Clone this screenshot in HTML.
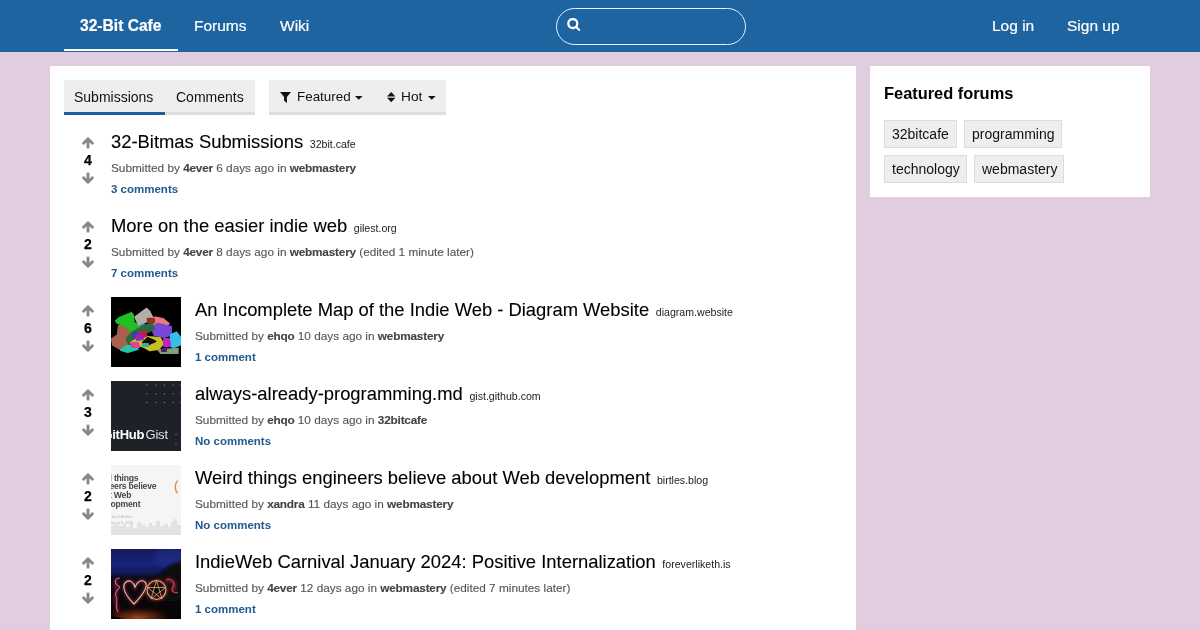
<!DOCTYPE html>
<html><head><meta charset="utf-8">
<style>
*{margin:0;padding:0;box-sizing:border-box}
html,body{width:1200px;height:630px;overflow:hidden}
body{background:#e0cde0;font-family:"Liberation Sans",sans-serif;position:relative;color:#000}
.a{position:absolute;white-space:nowrap;line-height:20px}
#hdr{position:absolute;left:0;top:0;width:1200px;height:52px;background:#1d64a0}
.nav{color:#fff;font-size:15.5px;top:16px;-webkit-text-stroke:0.2px #fff}
#uline{position:absolute;left:64px;top:49px;width:114px;height:2px;background:#fff}
#search{position:absolute;left:556px;top:8px;width:190px;height:37px;border:1px solid #e8f0ff;border-radius:19px}
#main{position:absolute;left:50px;top:66px;width:806px;height:600px;background:#fff}
#side{position:absolute;left:870px;top:66px;width:280px;height:131px;background:#fff}
.tabbox{position:absolute;top:80px;height:35px;background:#eee;border-bottom:3px solid #ddd}
.tab{font-size:14px;color:#111}
.vote{font-size:14px;font-weight:bold;text-align:center;width:20px;-webkit-text-stroke:0.25px #000}
.title{font-size:18.4px;color:#000;-webkit-text-stroke:0.1px #000}
.dom{font-size:10.6px;color:#222;-webkit-text-stroke:0;margin-left:1.5px}
.meta{font-size:11.8px;color:#555;-webkit-text-stroke:0.12px #555}
.meta b{color:#444;letter-spacing:-0.2px;-webkit-text-stroke:0.12px #444}
.cm{font-size:11.5px;font-weight:bold;color:#22598e}
.tag{position:absolute;height:28px;background:#eee;border:1px solid #ddd;font-size:14px;line-height:26px;padding:0 7px;color:#111;white-space:nowrap}
svg.arr{position:absolute}
.thumb{position:absolute;width:70px;height:70px;overflow:hidden}
</style></head><body>
<div id="root" style="position:absolute;left:0;top:0;width:1200px;height:630px;will-change:transform">
<div id="hdr"></div>
<div class="a nav" style="left:80px;font-weight:bold;font-size:15.6px">32-Bit Cafe</div>
<div class="a nav" style="left:194px">Forums</div>
<div class="a nav" style="left:280px">Wiki</div>
<div id="uline"></div>
<div id="search"></div>
<svg style="position:absolute;left:567px;top:18px" width="14" height="14" viewBox="0 0 14 14"><circle cx="5.8" cy="5.5" r="4.5" fill="none" stroke="#fff" stroke-width="2.3"/><line x1="9" y1="8.8" x2="12.2" y2="12" stroke="#fff" stroke-width="2" stroke-linecap="round"/></svg>
<div class="a nav" style="left:992px">Log in</div>
<div class="a nav" style="left:1067px">Sign up</div>

<div id="main"></div>
<div id="side"></div>

<div class="tabbox" style="left:64px;width:191px"></div>
<div style="position:absolute;left:64px;top:112px;width:101px;height:3px;background:#1d5f9a"></div>
<div class="a tab" style="left:74px;top:87px">Submissions</div>
<div class="a tab" style="left:176px;top:87px">Comments</div>

<div class="tabbox" style="left:269px;width:177px"></div>
<svg style="position:absolute;left:280px;top:92px" width="11" height="11" viewBox="0 0 11 11"><path d="M0 0H11L6.9 4.9V11L4.1 8.8V4.9Z" fill="#111"/></svg>
<div class="a tab" style="left:297px;top:87px;font-size:13.4px">Featured</div>
<svg style="position:absolute;left:355px;top:96px" width="8" height="5" viewBox="0 0 8 5"><path d="M0 0H7.6L3.8 3.8Z" fill="#111"/></svg>
<svg style="position:absolute;left:387px;top:92px" width="9" height="11" viewBox="0 0 9 11"><path d="M4.2 0L8.4 4.4H0Z M0 5.8H8.4L4.2 10.2Z" fill="#111"/></svg>
<div class="a tab" style="left:401px;top:87px;font-size:13.7px">Hot</div>
<svg style="position:absolute;left:428px;top:96px" width="8" height="5" viewBox="0 0 8 5"><path d="M0 0H7.6L3.8 3.8Z" fill="#111"/></svg>

<div class="a" style="left:884px;top:83px;font-size:16.4px;font-weight:bold">Featured forums</div>
<div class="tag" style="left:884px;top:120px;width:73px">32bitcafe</div>
<div class="tag" style="left:964px;top:120px;width:98px">programming</div>
<div class="tag" style="left:884px;top:155px;width:83px">technology</div>
<div class="tag" style="left:974px;top:155px;width:90px">webmastery</div>

<!-- POSTS -->
<div id="posts">
<svg class="arr" style="left:82px;top:137px" width="12" height="12" viewBox="109 165 1575 1575"><path d="M1675 971q0 51-37 90l-75 75q-38 38-91 38-54 0-90-38l-294-293v704q0 52-37.5 84.5t-90.5 32.5h-128q-53 0-90.5-32.5t-37.5-84.5v-704l-294 293q-36 38-90 38t-90-38l-75-75q-38-38-38-90 0-53 38-91l651-651q35-37 90-37 54 0 91 37l651 651q37 39 37 91z" fill="#888"/></svg>
<div class="a vote" style="left:78px;top:150px">4</div>
<svg class="arr" style="left:82px;top:172px;transform:scaleY(-1)" width="12" height="12" viewBox="109 165 1575 1575"><path d="M1675 971q0 51-37 90l-75 75q-38 38-91 38-54 0-90-38l-294-293v704q0 52-37.5 84.5t-90.5 32.5h-128q-53 0-90.5-32.5t-37.5-84.5v-704l-294 293q-36 38-90 38t-90-38l-75-75q-38-38-38-90 0-53 38-91l651-651q35-37 90-37 54 0 91 37l651 651q37 39 37 91z" fill="#888"/></svg>
<div class="a title" style="left:111px;top:132px">32-Bitmas Submissions <span class="dom">32bit.cafe</span></div>
<div class="a meta" style="left:111px;top:158px">Submitted by <b>4ever</b> 6 days ago in <b>webmastery</b></div>
<div class="a cm" style="left:111px;top:179px">3 comments</div>
<svg class="arr" style="left:82px;top:221px" width="12" height="12" viewBox="109 165 1575 1575"><path d="M1675 971q0 51-37 90l-75 75q-38 38-91 38-54 0-90-38l-294-293v704q0 52-37.5 84.5t-90.5 32.5h-128q-53 0-90.5-32.5t-37.5-84.5v-704l-294 293q-36 38-90 38t-90-38l-75-75q-38-38-38-90 0-53 38-91l651-651q35-37 90-37 54 0 91 37l651 651q37 39 37 91z" fill="#888"/></svg>
<div class="a vote" style="left:78px;top:234px">2</div>
<svg class="arr" style="left:82px;top:256px;transform:scaleY(-1)" width="12" height="12" viewBox="109 165 1575 1575"><path d="M1675 971q0 51-37 90l-75 75q-38 38-91 38-54 0-90-38l-294-293v704q0 52-37.5 84.5t-90.5 32.5h-128q-53 0-90.5-32.5t-37.5-84.5v-704l-294 293q-36 38-90 38t-90-38l-75-75q-38-38-38-90 0-53 38-91l651-651q35-37 90-37 54 0 91 37l651 651q37 39 37 91z" fill="#888"/></svg>
<div class="a title" style="left:111px;top:216px">More on the easier indie web <span class="dom">gilest.org</span></div>
<div class="a meta" style="left:111px;top:242px">Submitted by <b>4ever</b> 8 days ago in <b>webmastery</b> (edited 1 minute later)</div>
<div class="a cm" style="left:111px;top:263px">7 comments</div>
<svg class="arr" style="left:82px;top:305px" width="12" height="12" viewBox="109 165 1575 1575"><path d="M1675 971q0 51-37 90l-75 75q-38 38-91 38-54 0-90-38l-294-293v704q0 52-37.5 84.5t-90.5 32.5h-128q-53 0-90.5-32.5t-37.5-84.5v-704l-294 293q-36 38-90 38t-90-38l-75-75q-38-38-38-90 0-53 38-91l651-651q35-37 90-37 54 0 91 37l651 651q37 39 37 91z" fill="#888"/></svg>
<div class="a vote" style="left:78px;top:318px">6</div>
<svg class="arr" style="left:82px;top:340px;transform:scaleY(-1)" width="12" height="12" viewBox="109 165 1575 1575"><path d="M1675 971q0 51-37 90l-75 75q-38 38-91 38-54 0-90-38l-294-293v704q0 52-37.5 84.5t-90.5 32.5h-128q-53 0-90.5-32.5t-37.5-84.5v-704l-294 293q-36 38-90 38t-90-38l-75-75q-38-38-38-90 0-53 38-91l651-651q35-37 90-37 54 0 91 37l651 651q37 39 37 91z" fill="#888"/></svg>
<div class="thumb" style="left:111px;top:297px"><svg width="70" height="70" viewBox="0 0 70 70"><rect width="70" height="70" fill="#000"/><g filter="url(#bl)"><path d="M1 42 L6.7 38 L7.8 29 L16.7 28 L21 33 L20 44 L16.7 50 L9 52 L2 48Z" fill="#a86050" stroke="#a86050" stroke-width="2" stroke-linejoin="round"/><path d="M5 24 L8.3 21 L20.5 16 L22 18 L22.8 25.5 L27 28 L29 32 L25.5 35.5 L21 34.5 L13 28 L6.7 26Z" fill="#20c020" stroke="#20c020" stroke-width="2" stroke-linejoin="round"/><path d="M10 53 L15.5 49 L23 49 L26.7 52 L16.7 55Z" fill="#20c8a8" stroke="#20c8a8" stroke-width="2" stroke-linejoin="round"/><path d="M24.4 20 L35.5 11.7 L38.3 14.4 L42 21.7 L33 25.5 L27.8 27.8Z" fill="#b0b0a8" stroke="#b0b0a8" stroke-width="2" stroke-linejoin="round"/><path d="M36.7 22 L44.4 20.5 L52 22 L57.8 26.7 L53 29 L42 27.8Z" fill="#f07878" stroke="#f07878" stroke-width="2" stroke-linejoin="round"/><path d="M36.7 21.7 L43 22 L43 25.5 L37 25.5Z" fill="#903020" stroke="#903020" stroke-width="2" stroke-linejoin="round"/><path d="M29 30 L33 28 L35.5 33 L30 34.5Z" fill="#30c0e0" stroke="#30c0e0" stroke-width="2" stroke-linejoin="round"/><path d="M41 31 L46.7 26.7 L60 30 L60 37.8 L53 40 L43.3 37.8Z" fill="#7848d8" stroke="#7848d8" stroke-width="2" stroke-linejoin="round"/><path d="M15.5 42 L21 35.5 L32 29 L41 26.7 L43 32 L33 36.7 L25.5 42 L17.8 46.7Z" fill="#2a6a40" stroke="#2a6a40" stroke-width="2" stroke-linejoin="round"/><path d="M60 37.8 L65.5 35.5 L69 40 L69 47.8 L63 50 L59 49Z" fill="#30c0e8" stroke="#30c0e8" stroke-width="2" stroke-linejoin="round"/><path d="M20 45.5 L27.8 41 L36.7 40 L49 41 L52 46.7 L47.8 52 L38.9 53.3 L33 50 L26.7 47.8Z" fill="#c8c020" stroke="#c8c020" stroke-width="2" stroke-linejoin="round"/><path d="M22 36.7 L27.8 35.5 L29 40 L24 41Z" fill="#3040b0" stroke="#3040b0" stroke-width="2" stroke-linejoin="round"/><path d="M27.8 35.5 L34.4 34.4 L35.5 38.9 L29 41Z" fill="#c02040" stroke="#c02040" stroke-width="2" stroke-linejoin="round"/><path d="M25 38.5 L31 38 L32 42 L26 43Z" fill="#a020c0" stroke="#a020c0" stroke-width="2" stroke-linejoin="round"/><path d="M20.5 46 L27 46 L28 50 L21 50Z" fill="#e040a0" stroke="#e040a0" stroke-width="2" stroke-linejoin="round"/><path d="M53 42 L58 42 L59 49 L53 49Z" fill="#c020c0" stroke="#c020c0" stroke-width="2" stroke-linejoin="round"/><path d="M32 45.5 L36.7 41 L44.4 44.4 L39 46.7 L35.5 49Z" fill="#100808" stroke="#100808" stroke-width="2" stroke-linejoin="round"/><path d="M47.8 53.3 L66.7 51.7 L66.7 56 L50 56Z" fill="#80a080" stroke="#80a080" stroke-width="2" stroke-linejoin="round"/><path d="M51 52 L55 52 L55 54 L51 54Z" fill="#502060" stroke="#502060" stroke-width="2" stroke-linejoin="round"/><path d="M32 47 L37 47 L37 49 L32 49Z" fill="#30b0a0" stroke="#30b0a0" stroke-width="2" stroke-linejoin="round"/></g><defs><filter id="bl"><feGaussianBlur stdDeviation="0.5"/></filter></defs></svg></div>
<div class="a title" style="left:195px;top:300px">An Incomplete Map of the Indie Web - Diagram Website <span class="dom">diagram.website</span></div>
<div class="a meta" style="left:195px;top:326px">Submitted by <b>ehqo</b> 10 days ago in <b>webmastery</b></div>
<div class="a cm" style="left:195px;top:347px">1 comment</div>
<svg class="arr" style="left:82px;top:389px" width="12" height="12" viewBox="109 165 1575 1575"><path d="M1675 971q0 51-37 90l-75 75q-38 38-91 38-54 0-90-38l-294-293v704q0 52-37.5 84.5t-90.5 32.5h-128q-53 0-90.5-32.5t-37.5-84.5v-704l-294 293q-36 38-90 38t-90-38l-75-75q-38-38-38-90 0-53 38-91l651-651q35-37 90-37 54 0 91 37l651 651q37 39 37 91z" fill="#888"/></svg>
<div class="a vote" style="left:78px;top:402px">3</div>
<svg class="arr" style="left:82px;top:424px;transform:scaleY(-1)" width="12" height="12" viewBox="109 165 1575 1575"><path d="M1675 971q0 51-37 90l-75 75q-38 38-91 38-54 0-90-38l-294-293v704q0 52-37.5 84.5t-90.5 32.5h-128q-53 0-90.5-32.5t-37.5-84.5v-704l-294 293q-36 38-90 38t-90-38l-75-75q-38-38-38-90 0-53 38-91l651-651q35-37 90-37 54 0 91 37l651 651q37 39 37 91z" fill="#888"/></svg>
<div class="thumb" style="left:111px;top:381px"><svg width="70" height="70" viewBox="0 0 70 70"><rect width="70" height="70" fill="#1e2228"/><g fill="#9a9a9a"><rect x="35.5" y="3.5" width="1" height="1"/><rect x="35.5" y="12.3" width="1" height="1"/><rect x="35.5" y="21" width="1" height="1"/><rect x="44.3" y="3.5" width="1" height="1"/><rect x="44.3" y="12.3" width="1" height="1"/><rect x="44.3" y="21" width="1" height="1"/><rect x="53" y="3.5" width="1" height="1"/><rect x="53" y="12.3" width="1" height="1"/><rect x="53" y="21" width="1" height="1"/><rect x="61.8" y="3.5" width="1" height="1"/><rect x="61.8" y="12.3" width="1" height="1"/><rect x="61.8" y="21" width="1" height="1"/><rect x="69.5" y="3.5" width="1" height="1"/><rect x="69.5" y="12.3" width="1" height="1"/><rect x="69.5" y="21" width="1" height="1"/><rect x="64.5" y="53" width="1" height="1"/><rect x="64.5" y="62" width="1" height="1"/></g><text x="-8.5" y="58" font-family="Liberation Sans" font-size="13" font-weight="bold" fill="#fff" letter-spacing="-0.3">GitHub</text><text x="34.5" y="58" font-family="Liberation Sans" font-size="13" fill="#e0e0e0" letter-spacing="-0.2">Gist</text></svg></div>
<div class="a title" style="left:195px;top:384px">always-already-programming.md <span class="dom">gist.github.com</span></div>
<div class="a meta" style="left:195px;top:410px">Submitted by <b>ehqo</b> 10 days ago in <b>32bitcafe</b></div>
<div class="a cm" style="left:195px;top:431px">No comments</div>
<svg class="arr" style="left:82px;top:473px" width="12" height="12" viewBox="109 165 1575 1575"><path d="M1675 971q0 51-37 90l-75 75q-38 38-91 38-54 0-90-38l-294-293v704q0 52-37.5 84.5t-90.5 32.5h-128q-53 0-90.5-32.5t-37.5-84.5v-704l-294 293q-36 38-90 38t-90-38l-75-75q-38-38-38-90 0-53 38-91l651-651q35-37 90-37 54 0 91 37l651 651q37 39 37 91z" fill="#888"/></svg>
<div class="a vote" style="left:78px;top:486px">2</div>
<svg class="arr" style="left:82px;top:508px;transform:scaleY(-1)" width="12" height="12" viewBox="109 165 1575 1575"><path d="M1675 971q0 51-37 90l-75 75q-38 38-91 38-54 0-90-38l-294-293v704q0 52-37.5 84.5t-90.5 32.5h-128q-53 0-90.5-32.5t-37.5-84.5v-704l-294 293q-36 38-90 38t-90-38l-75-75q-38-38-38-90 0-53 38-91l651-651q35-37 90-37 54 0 91 37l651 651q37 39 37 91z" fill="#888"/></svg>
<div class="thumb" style="left:111px;top:465px"><svg width="70" height="70" viewBox="0 0 70 70"><rect width="70" height="70" fill="#f5f5f5"/><g font-family="Liberation Sans" font-weight="bold" font-size="8.6" fill="#474747" letter-spacing="-0.2"><text x="-1.5" y="15.6">l things</text><text x="-1.5" y="24.4">eers believe</text><text x="-2" y="33.1">t Web</text><text x="-0.5" y="41.9">opment</text></g><g font-family="Liberation Sans" font-size="3.6" fill="#b0b0b0"><text x="0" y="53">Jan 6 Brirtles</text><text x="0" y="58.5">nuary 6, 2024</text></g><path d="M0 70 V60 H3 V57 H7 V61 H12 V58 H15 V62 H19 V59 H22 V63 H26 V57 H30 V60 H34 V62 H38 V58 H41 V61 H45 V56 H49 V61 H53 V59 H57 V62 H60 V57 H63 V54 H66 V60 H70 V70Z" fill="#e2e2e2"/><path d="M66.5 15.5 Q62 22 66.5 28.5" fill="none" stroke="#e08848" stroke-width="1.3"/></svg></div>
<div class="a title" style="left:195px;top:468px">Weird things engineers believe about Web development <span class="dom">birtles.blog</span></div>
<div class="a meta" style="left:195px;top:494px">Submitted by <b>xandra</b> 11 days ago in <b>webmastery</b></div>
<div class="a cm" style="left:195px;top:515px">No comments</div>
<svg class="arr" style="left:82px;top:557px" width="12" height="12" viewBox="109 165 1575 1575"><path d="M1675 971q0 51-37 90l-75 75q-38 38-91 38-54 0-90-38l-294-293v704q0 52-37.5 84.5t-90.5 32.5h-128q-53 0-90.5-32.5t-37.5-84.5v-704l-294 293q-36 38-90 38t-90-38l-75-75q-38-38-38-90 0-53 38-91l651-651q35-37 90-37 54 0 91 37l651 651q37 39 37 91z" fill="#888"/></svg>
<div class="a vote" style="left:78px;top:570px">2</div>
<svg class="arr" style="left:82px;top:592px;transform:scaleY(-1)" width="12" height="12" viewBox="109 165 1575 1575"><path d="M1675 971q0 51-37 90l-75 75q-38 38-91 38-54 0-90-38l-294-293v704q0 52-37.5 84.5t-90.5 32.5h-128q-53 0-90.5-32.5t-37.5-84.5v-704l-294 293q-36 38-90 38t-90-38l-75-75q-38-38-38-90 0-53 38-91l651-651q35-37 90-37 54 0 91 37l651 651q37 39 37 91z" fill="#888"/></svg>
<div class="thumb" style="left:111px;top:549px"><svg width="70" height="70" viewBox="0 0 70 70"><defs><linearGradient id="sky" x1="0" y1="0" x2="0" y2="1"><stop offset="0" stop-color="#141a58"/><stop offset="0.22" stop-color="#18227a"/><stop offset="0.33" stop-color="#131a5a"/><stop offset="0.42" stop-color="#0a0a16"/><stop offset="1" stop-color="#080404"/></linearGradient><radialGradient id="gr" cx="0.42" cy="0.85" r="0.55"><stop offset="0" stop-color="#b85018" stop-opacity="0.9"/><stop offset="0.55" stop-color="#682410" stop-opacity="0.6"/><stop offset="1" stop-color="#100" stop-opacity="0"/></radialGradient><filter id="gl" x="-20%" y="-20%" width="140%" height="140%"><feGaussianBlur stdDeviation="0.6"/></filter><filter id="gl2" x="-30%" y="-30%" width="160%" height="160%"><feGaussianBlur stdDeviation="1.8"/></filter><filter id="gl3" x="-30%" y="-30%" width="160%" height="160%"><feGaussianBlur stdDeviation="2.5"/></filter></defs><rect width="70" height="70" fill="url(#sky)"/><ellipse cx="58" cy="8" rx="16" ry="10" fill="#2a3aa0" opacity="0.35" filter="url(#gl3)"/><path d="M40 32 C48 26 54 20 60 16 C64 14 68 13 72 12 L72 52 L40 52Z" fill="#07070c" filter="url(#gl2)"/><ellipse cx="32" cy="61" rx="34" ry="11" fill="url(#gr)"/><g filter="url(#gl2)" opacity="0.6"><path d="M23 55 C14 46 10 37 15 33 C19 30 23 34 24 38 C26 33 30 30 34 33 C38 37 31 47 23 55Z" fill="none" stroke="#b03030" stroke-width="3"/><circle cx="45.5" cy="41" r="9.5" fill="none" stroke="#b04020" stroke-width="3"/><path d="M55 31 C62 30 66 36 62 42" fill="none" stroke="#b02040" stroke-width="4"/><path d="M6 30 C2 36 8 40 5 46 C2 52 8 58 6 64" fill="none" stroke="#b02050" stroke-width="3"/></g><g filter="url(#gl)"><path d="M23 55 C14 46 10 37 15 33 C19 30 23 34 24 38 C26 33 30 30 34 33 C38 37 31 47 23 55Z" fill="none" stroke="#e8b8b0" stroke-width="1.1"/><circle cx="45.5" cy="41" r="9.5" fill="none" stroke="#e8a880" stroke-width="1.1"/><path d="M45.5 31.5 L51 50 L36.5 38.5 L54.5 38.5 L40 50Z" fill="none" stroke="#e8a880" stroke-width="0.8"/><path d="M9 29 C3 29 3 35 8 37 C11 39 2 42 5 47 C8 52 3 56 7 63" fill="none" stroke="#d05878" stroke-width="1.1"/><path d="M55 31 C60 29 65 33 62 38 C59 42 64 45 67 43" fill="none" stroke="#c83850" stroke-width="1.3"/></g></svg></div>
<div class="a title" style="left:195px;top:552px">IndieWeb Carnival January 2024: Positive Internalization <span class="dom">foreverliketh.is</span></div>
<div class="a meta" style="left:195px;top:578px">Submitted by <b>4ever</b> 12 days ago in <b>webmastery</b> (edited 7 minutes later)</div>
<div class="a cm" style="left:195px;top:599px">1 comment</div>
</div>
</div>
</body></html>
